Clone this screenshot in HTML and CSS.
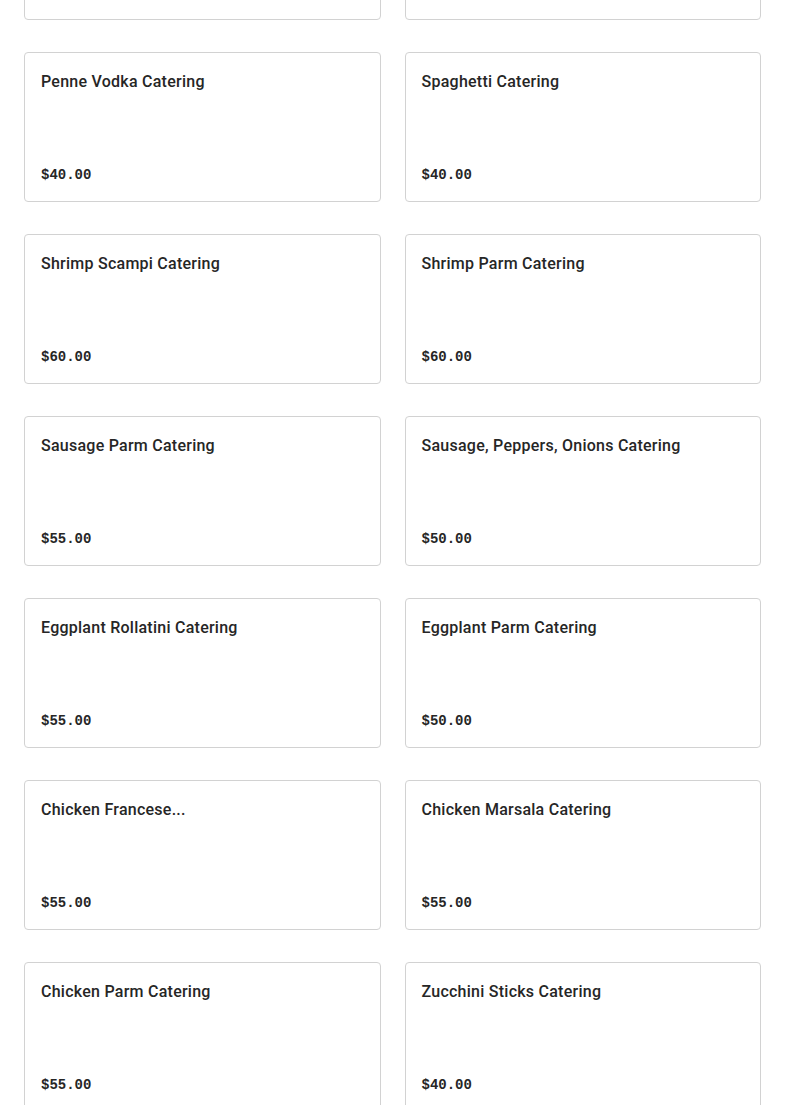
FILE: index.html
```html
<!DOCTYPE html>
<html>
<head>
<meta charset="utf-8">
<link rel="stylesheet" href="styles.css">
</head>
<body>
<main class="grid">
  <div class="card"><div class="title">Baked Ziti Catering</div><div class="price">$40.00</div></div>
  <div class="card"><div class="title">Stuffed Shells Catering</div><div class="price">$40.00</div></div>
  <div class="card"><div class="title">Penne Vodka Catering</div><div class="price">$40.00</div></div>
  <div class="card"><div class="title">Spaghetti Catering</div><div class="price">$40.00</div></div>
  <div class="card"><div class="title">Shrimp Scampi Catering</div><div class="price">$60.00</div></div>
  <div class="card"><div class="title">Shrimp Parm Catering</div><div class="price">$60.00</div></div>
  <div class="card"><div class="title">Sausage Parm Catering</div><div class="price">$55.00</div></div>
  <div class="card"><div class="title">Sausage, Peppers, Onions Catering</div><div class="price">$50.00</div></div>
  <div class="card"><div class="title">Eggplant Rollatini Catering</div><div class="price">$55.00</div></div>
  <div class="card"><div class="title">Eggplant Parm Catering</div><div class="price">$50.00</div></div>
  <div class="card"><div class="title">Chicken Francese...</div><div class="price">$55.00</div></div>
  <div class="card"><div class="title">Chicken Marsala Catering</div><div class="price">$55.00</div></div>
  <div class="card"><div class="title">Chicken Parm Catering</div><div class="price">$55.00</div></div>
  <div class="card"><div class="title">Zucchini Sticks Catering</div><div class="price">$40.00</div></div>
</main>
</body>
</html>
```

FILE: styles.css
```css
html, body {
  margin: 0;
  padding: 0;
  background: #ffffff;
  overflow: hidden;
}
.grid {
  display: grid;
  grid-template-columns: 1fr 1fr;
  column-gap: 24px;
  row-gap: 32px;
  padding: 0 24px;
  margin-top: -130px;
}
.card {
  box-sizing: border-box;
  height: 150px;
  border: 1px solid #d2d2d2;
  border-radius: 4px;
  padding: 17px 16px 16px;
  display: flex;
  flex-direction: column;
  justify-content: space-between;
}
.title {
  font-family: Roboto, "Liberation Sans", sans-serif;
  font-weight: 500;
  font-size: 16px;
  line-height: 24px;
  letter-spacing: 0.25px;
  color: #262626;
}
.price {
  font-family: "Liberation Mono", monospace;
  font-weight: 700;
  font-size: 14px;
  line-height: 20px;
  color: #262626;
}
```
